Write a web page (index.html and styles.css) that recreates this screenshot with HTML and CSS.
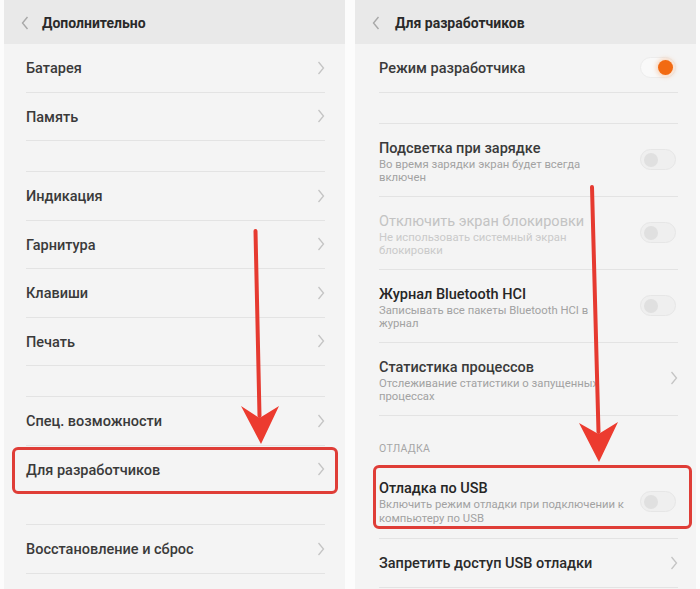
FILE: index.html
```html
<!DOCTYPE html>
<html lang="ru">
<head>
<meta charset="utf-8">
<title>Настройки</title>
<link rel="stylesheet" href="styles.css">
</head>
<body>
<div class="screen">
  <section class="panel panel-left">
    <header class="bar">
      <svg class="back" width="8" height="14" viewBox="0 0 8 14"><path d="M6.5 1 L1.5 7 L6.5 13"/></svg>
      <h1 class="bar-title">Дополнительно</h1>
    </header>
    <div class="list">
      <div class="item"><span class="label">Батарея</span><svg class="chev" width="8" height="14" viewBox="0 0 8 14"><path d="M1.5 1 L6.5 7 L1.5 13"/></svg></div>
      <div class="item"><span class="label">Память</span><svg class="chev" width="8" height="14" viewBox="0 0 8 14"><path d="M1.5 1 L6.5 7 L1.5 13"/></svg></div>
      <div class="spacer"></div>
      <div class="item"><span class="label">Индикация</span><svg class="chev" width="8" height="14" viewBox="0 0 8 14"><path d="M1.5 1 L6.5 7 L1.5 13"/></svg></div>
      <div class="item"><span class="label">Гарнитура</span><svg class="chev" width="8" height="14" viewBox="0 0 8 14"><path d="M1.5 1 L6.5 7 L1.5 13"/></svg></div>
      <div class="item"><span class="label">Клавиши</span><svg class="chev" width="8" height="14" viewBox="0 0 8 14"><path d="M1.5 1 L6.5 7 L1.5 13"/></svg></div>
      <div class="item"><span class="label">Печать</span><svg class="chev" width="8" height="14" viewBox="0 0 8 14"><path d="M1.5 1 L6.5 7 L1.5 13"/></svg></div>
      <div class="spacer"></div>
      <div class="item"><span class="label">Спец. возможности</span><svg class="chev" width="8" height="14" viewBox="0 0 8 14"><path d="M1.5 1 L6.5 7 L1.5 13"/></svg></div>
      <div class="item item-marked-left"><span class="label">Для разработчиков</span><svg class="chev" width="8" height="14" viewBox="0 0 8 14"><path d="M1.5 1 L6.5 7 L1.5 13"/></svg></div>
      <div class="spacer"></div>
      <div class="item"><span class="label">Восстановление и сброс</span><svg class="chev" width="8" height="14" viewBox="0 0 8 14"><path d="M1.5 1 L6.5 7 L1.5 13"/></svg></div>
    </div>
  </section>

  <section class="panel panel-right">
    <header class="bar">
      <svg class="back" width="8" height="14" viewBox="0 0 8 14"><path d="M6.5 1 L1.5 7 L6.5 13"/></svg>
      <h1 class="bar-title">Для разработчиков</h1>
    </header>
    <div class="list">
      <div class="item"><span class="label">Режим разработчика</span><span class="toggle toggle-on"><span class="knob"></span></span></div>
      <div class="spacer"></div>
      <div class="item item-tall">
        <div class="text"><div class="title">Подсветка при зарядке</div><div class="sub">Во время зарядки экран будет всегда<br>включен</div></div>
        <span class="toggle"><span class="knob"></span></span>
      </div>
      <div class="item item-tall item-disabled">
        <div class="text"><div class="title">Отключить экран блокировки</div><div class="sub">Не использовать системный экран<br>блокировки</div></div>
        <span class="toggle"><span class="knob"></span></span>
      </div>
      <div class="item item-tall">
        <div class="text"><div class="title title-strong">Журнал Bluetooth HCI</div><div class="sub">Записывать все пакеты Bluetooth HCI в<br>журнал</div></div>
        <span class="toggle"><span class="knob"></span></span>
      </div>
      <div class="item item-tall">
        <div class="text"><div class="title">Статистика процессов</div><div class="sub">Отслеживание статистики о запущенных<br>процессах</div></div>
        <svg class="chev" width="8" height="14" viewBox="0 0 8 14"><path d="M1.5 1 L6.5 7 L1.5 13"/></svg>
      </div>
      <div class="section">ОТЛАДКА</div>
      <div class="item item-tall item-usb item-marked-right">
        <div class="text"><div class="title title-strong">Отладка по USB</div><div class="sub">Включить режим отладки при подключении к<br>компьютеру по USB</div></div>
        <span class="toggle"><span class="knob"></span></span>
      </div>
      <div class="item"><span class="label label-strong">Запретить доступ USB отладки</span><svg class="chev" width="8" height="14" viewBox="0 0 8 14"><path d="M1.5 1 L6.5 7 L1.5 13"/></svg></div>
    </div>
  </section>

  <svg class="arrows" width="700" height="589" viewBox="0 0 700 589">
    <line x1="255.5" y1="231" x2="259.5" y2="416" />
    <polygon points="241,406 259.5,418 279,406 261,444" />
    <line x1="592" y1="187" x2="598.5" y2="432" />
    <polygon points="579,423 598.5,434 618,422 599,462" />
  </svg>
</div>
</body>
</html>
```

FILE: styles.css
```css
* { box-sizing: border-box; }

html, body {
  margin: 0;
  padding: 0;
  background: #fcfcfc;
}

body {
  font-family: Roboto, "Noto Sans", "Liberation Sans", sans-serif;
  color: #333;
}

.screen {
  position: relative;
  width: 700px;
  height: 589px;
  overflow: hidden;
  display: flex;
  gap: 10px;
  padding-left: 4px;
}

.panel {
  width: 341px;
  height: 589px;
  background: #f4f4f4;
  display: flex;
  flex-direction: column;
}

.bar {
  height: 44px;
  background: #e9e9e9;
  display: flex;
  align-items: center;
  padding-left: 17px;
  padding-top: 2px;
  gap: 13px;
  flex-shrink: 0;
}

.panel-right .bar { gap: 15px; }

.back path {
  fill: none;
  stroke: #a8a8a8;
  stroke-width: 1.4;
}

.bar-title {
  margin: 0;
  font-size: 14px;
  font-weight: 700;
  color: #2a2a2a;
}

.list {
  display: flex;
  flex-direction: column;
}

.item {
  position: relative;
  height: 48.5px;
  display: flex;
  align-items: center;
  justify-content: space-between;
  border-bottom: 1px solid #e3e3e3;
  margin: 0 20px 0 22px;
  padding-top: 2px;
  flex-shrink: 0;
}

.panel-right .item { margin: 0 18px 0 24px; }

.spacer {
  height: 31px;
  border-bottom: 1px solid #e3e3e3;
  margin: 0 20px 0 22px;
  flex-shrink: 0;
}

.panel-right .spacer { margin: 0 18px 0 24px; }

.label {
  font-size: 14.5px;
  font-weight: 500;
  color: #3a3a3a;
}

.label-strong { color: #2a2a2a; }

.chev { flex-shrink: 0; margin-top: -2px; }
.chev path {
  fill: none;
  stroke: #c4c4c4;
  stroke-width: 1.3;
}

.item-tall {
  height: 73px;
  padding-top: 0;
  align-items: center;
}

.item-tall .text {
  align-self: flex-start;
  padding-top: 16px;
}

.title {
  font-size: 14.5px;
  line-height: 18px;
  font-weight: 500;
  color: #3a3a3a;
}

.title-strong { color: #262626; }

.sub {
  font-size: 11.3px;
  line-height: 13.5px;
  color: #a2a2a2;
  white-space: nowrap;
}

.item-disabled .title { color: #c3c3c3; font-weight: 400; }
.item-disabled .sub { color: #cacaca; }

.item-usb {
  height: 74px;
}

.item-usb .text { padding-top: 15px; }

.section {
  height: 49.5px;
  padding: 26px 0 0 24px;
  font-size: 10.5px;
  line-height: 14px;
  color: #a6a6a6;
  letter-spacing: 0.3px;
  flex-shrink: 0;
}

.toggle {
  position: relative;
  width: 36px;
  height: 21px;
  border-radius: 11px;
  background: #efefef;
  border: 1px solid #e6e6e6;
  flex-shrink: 0;
  margin-right: 2px;
}

.item:not(.item-tall) .toggle { margin-top: -2px; }

.toggle .knob {
  position: absolute;
  top: 2.5px;
  left: 3px;
  width: 14px;
  height: 14px;
  border-radius: 50%;
  background: #e0e0e0;
}

.toggle-on {
  background: #f9f9f9;
  border-color: #ececec;
}

.toggle-on .knob {
  left: auto;
  right: 2px;
  top: 2px;
  width: 15px;
  height: 15px;
  background: #f26a12;
  box-shadow: 0 0 4px 2px rgba(245, 150, 80, 0.35);
}

.item-marked-left::after {
  content: "";
  position: absolute;
  top: 1px;
  bottom: -1px;
  left: -14px;
  right: -13px;
  border: 3.5px solid #df3d37;
  border-radius: 6px;
}

.item-marked-right::after {
  content: "";
  position: absolute;
  top: 0;
  bottom: 9px;
  left: -6px;
  right: -14px;
  border: 3.5px solid #df3d37;
  border-radius: 6px;
}

.arrows {
  position: absolute;
  left: 0;
  top: 0;
  pointer-events: none;
}

.arrows line {
  stroke: #e63a30;
  stroke-width: 4;
  stroke-linecap: round;
}

.arrows polygon {
  fill: #ec3b2f;
}
```
